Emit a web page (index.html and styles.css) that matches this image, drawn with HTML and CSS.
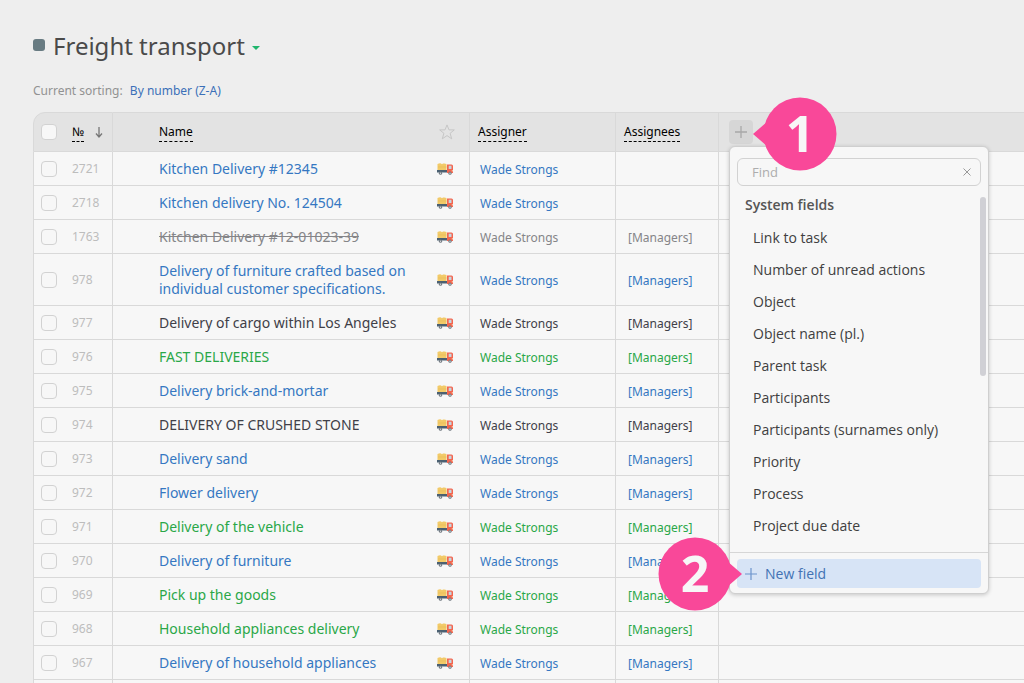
FILE: index.html
```html
<!DOCTYPE html>
<html lang="en">
<head>
<meta charset="utf-8">
<title>Freight transport</title>
<link rel="stylesheet" href="styles.css">
</head>
<body>
<svg class="sprite" aria-hidden="true">
  <symbol id="truck" viewBox="0 0 16 12">
    <rect x="0" y="7" width="11" height="2.500" fill="#4b6072"/>
    <path d="M.5 1q2-1 3.500-.6l1 .8 1-.6q2-.4 3.500.4V7H.5z" fill="#f2ca68"/>
    <path d="M1 4h8.500" stroke="#e9bd5a" stroke-width=".7"/>
    <path d="M10 1.500h4.500q1.500 0 1.500 1.500v7h-6z" fill="#f4654e"/>
    <path d="M11.700 2.700h2.800V6h-2.800z" fill="#c6d5de"/>
    <path d="M14.800 7h1.200v1.500h-1.200z" fill="#f7c0a0"/>
    <circle cx="3.500" cy="10.200" r="1.600" fill="#6c757d"/><circle cx="3.500" cy="10.200" r=".7" fill="#d9dcdf"/>
    <circle cx="13" cy="10.200" r="1.600" fill="#6c757d"/><circle cx="13" cy="10.200" r=".7" fill="#d9dcdf"/>
  </symbol>
</svg>
<main class="page">
  <h1 class="title"><span class="title-mark"></span>Freight transport<span class="title-caret"></span></h1>
  <p class="sorting">Current sorting: <a href="#">By number (Z-A)</a></p>
  <div class="grid">
  <table class="tasks">
    <colgroup><col class="c-num"><col class="c-name"><col class="c-assigner"><col class="c-assignees"><col></colgroup>
    <thead>
      <tr>
        <th><div class="num"><input type="checkbox" aria-label="Select all"><span class="head-label">№</span>
          <svg class="arrow" viewBox="0 0 8 11"><path d="M4 0v10M1 6.500L4 10l3-3.500" fill="none" stroke="#777" stroke-width="1.300"/></svg></div></th>
        <th><div class="name"><span class="text"><span class="head-label">Name</span></span>
          <svg class="star" viewBox="0 0 16 16"><path d="M8 .9l2 5h5.300l-4.200 3.400 1.600 5.500L8 11.600l-4.700 3.200 1.600-5.500L.7 5.900H6z" fill="none" stroke="#c6c6c6"/></svg></div></th>
        <th class="h-assigner"><span class="head-label">Assigner</span></th>
        <th class="h-assigner"><span class="head-label">Assignees</span></th>
        <th class="h-add">
          <button class="add" aria-label="Add column"><svg viewBox="0 0 12 12"><path d="M6 0v12M0 6h12" stroke="#a8a8a8" stroke-width="1.300"/></svg></button>
          <div class="menu">
            <div class="search"><input type="text" placeholder="Find" aria-label="Find"><button aria-label="Clear"><svg viewBox="0 0 8 8"><path d="M.5.5l7 7M7.500.5l-7 7" stroke="#999"/></svg></button></div>
            <div class="list">
              <h2>System fields</h2>
              <ul>
                <li>Link to task</li><li>Number of unread actions</li><li>Object</li><li>Object name (pl.)</li><li>Parent task</li><li>Participants</li><li>Participants (surnames only)</li><li>Priority</li><li>Process</li><li>Project due date</li>
              </ul>
              <span class="thumb"></span>
            </div>
            <div class="footer"><button class="new-field"><svg viewBox="0 0 12 12"><path d="M6 0v12M0 6h12" stroke="#6d94cc" stroke-width="1.200"/></svg>New field</button></div>
          </div>
          <span class="marker first"><svg viewBox="0 0 84 74"><circle cx="47" cy="37" r="36.500"/><path d="M0 37L15 24V50z"/></svg><b>1</b></span>
          <span class="marker second"><svg viewBox="0 0 84 74"><circle cx="37" cy="37" r="36.500"/><path d="M84 37L69 24V50z"/></svg><b>2</b></span>
        </th>
      </tr>
    </thead>
    <tbody id="rows"></tbody>
  </table>
  </div>
</main>
<script src="rows.js"></script>
</body>
</html>
```
FILE: rows.js
```js
const tasks = [
  ["2721", "Kitchen Delivery #12345", "blue", ""],
  ["2718", "Kitchen delivery No. 124504", "blue", ""],
  ["1763", "Kitchen Delivery #12-01023-39", "done", "[Managers]"],
  ["978", "Delivery of furniture crafted based on individual customer specifications.", "blue", "[Managers]"],
  ["977", "Delivery of cargo within Los Angeles", "dark", "[Managers]"],
  ["976", "FAST DELIVERIES", "green", "[Managers]"],
  ["975", "Delivery brick-and-mortar", "blue", "[Managers]"],
  ["974", "DELIVERY OF CRUSHED STONE", "dark", "[Managers]"],
  ["973", "Delivery sand", "blue", "[Managers]"],
  ["972", "Flower delivery", "blue", "[Managers]"],
  ["971", "Delivery of the vehicle", "green", "[Managers]"],
  ["970", "Delivery of furniture", "blue", "[Managers]"],
  ["969", "Pick up the goods", "green", "[Managers]"],
  ["968", "Household appliances delivery", "green", "[Managers]"],
  ["967", "Delivery of household appliances", "blue", "[Managers]"]
];
const rows = tasks.map(([id, name, state, assignees]) => `
  <tr class="${state}">
    <td><div class="num"><input type="checkbox" aria-label="Select ${id}"><span>${id}</span></div></td>
    <td><div class="name"><a class="text" href="#">${name}</a><svg class="truck" viewBox="0 0 16 12"><use href="#truck"/></svg></div></td>
    <td class="assigner"><a href="#">Wade Strongs</a></td>
    <td class="assignees">${assignees ? `<a href="#">${assignees}</a>` : ""}</td>
    <td></td>
  </tr>`);
rows.push("<tr><td></td><td></td><td></td><td></td><td></td></tr>");
document.getElementById("rows").innerHTML = rows.join("");
```
FILE: styles.css
```css
* { box-sizing: border-box; }
body {
  margin: 0;
  background: #eee;
  color: #404040;
  font: 12px/18px "Noto Sans", "Open Sans", sans-serif;
}
a { color: inherit; text-decoration: none; }
button { border: 0; padding: 0; font: inherit; }
svg { display: block; flex: none; }
.sprite { display: none; }
.page { height: 100vh; overflow: hidden; padding: 28px 0 0 33px; }
.title {
  display: flex;
  align-items: center;
  margin: 0;
  font-size: 24px;
  line-height: 36px;
  font-weight: 400;
  color: #4a4a4a;
}
.title-mark { width: 12px; height: 12px; margin: 0 8px 2px 0; border-radius: 3px; background: #687b82; }
.title-caret { margin: 4px 0 0 7px; border: 4px solid transparent; border-top-color: #1fb56c; border-bottom: 0; }
.sorting { margin: 18px 0 12px; color: #929292; }
.sorting a { margin-left: 4px; color: #3b70b8; }

.grid { margin-right: -2px; }
.tasks { width: 100%; table-layout: fixed; border-spacing: 0; }
.c-num { width: 80px; }
.c-name { width: 357px; }
.c-assigner { width: 146px; }
.c-assignees { width: 103px; }
th, td { height: 34px; padding: 0; text-align: left; font-weight: 400; border: solid #d9d9d9; border-width: 0 1px 1px 0; }
th { height: 40px; border-top-width: 1px; background: #e3e3e3; color: #000; }
td { background: #f7f7f7; }
th:first-child, td:first-child { border-left-width: 1px; }
th:first-child { border-top-left-radius: 12px; }
.head-label { display: inline-block; line-height: 18px; border-bottom: 1px dashed #000; }
.num { display: flex; align-items: center; padding-left: 7px; color: #bdbdbd; }
th .num { color: #000; }
.num input {
  appearance: none;
  width: 16px;
  height: 16px;
  margin: 0 15px 0 0;
  border: 1px solid #d2d2d2;
  border-radius: 4px;
  background: #f7f7f7;
}
td .num span { padding-top: 1px; }
.arrow { width: 8px; height: 11px; margin-left: 11px; }
.name { display: flex; align-items: center; padding: 0 16px 0 46px; }
.name .text { flex: 1; padding-right: 20px; }
td .name .text { font-size: 14px; }
th .name { padding-right: 14px; }
td .name { padding-top: 8px; padding-bottom: 7px; }
.star { width: 16px; height: 16px; }
.truck { width: 16px; height: 12px; }
.h-assigner { padding-left: 8px; }
.assigner { padding: 2px 0 0 10px; }
.assignees { padding: 2px 0 0 12px; }
.blue { color: #3577c2; }
.green { color: #2aa748; }
.dark { color: #404048; }
.done { color: #858588; }
.done .text { text-decoration: line-through; }

.h-add { position: relative; padding-left: 10px; }
.add { display: grid; place-items: center; width: 24px; height: 24px; border-radius: 4px; background: #d6d6d6; }
.add svg, .new-field svg { width: 12px; height: 12px; }
.menu {
  position: absolute;
  z-index: 1;
  top: 33px;
  left: 10px;
  width: 260px;
  border: 1px solid #cfcfcf;
  border-radius: 6px;
  background: #f7f7f7;
  box-shadow: 0 1px 4px rgba(0, 0, 0, .2);
  color: #404040;
  font-family: "Open Sans", "Noto Sans", sans-serif;
  font-size: 14px;
}
.search {
  display: flex;
  align-items: center;
  height: 28px;
  margin: 11px 7px 0;
  padding: 0 9px 0 14px;
  border: 1px solid #d2d2d2;
  border-radius: 6px;
}
.search input { flex: 1; min-width: 0; border: 0; padding: 0; outline: 0; background: none; font: inherit; font-size: 13px; }
.search input::placeholder { color: #adadad; }
.search button { background: none; }
.search svg { width: 8px; height: 8px; }
.list { position: relative; padding: 8px 0 10px 15px; }
.list h2 { margin: 0; color: #555; font-size: 14px; line-height: 22px; font-weight: 600; }
.list ul { margin: 6px 0 0; padding: 0 0 0 8px; list-style: none; }
.list li { line-height: 32px; }
.thumb { position: absolute; top: 11px; right: 2px; width: 6px; height: 179px; border-radius: 3px; background: #d0d0d5; }
.footer { padding: 6px 7px 5px; border-top: 1px solid #d6d6d6; }
.new-field {
  display: flex;
  align-items: center;
  gap: 8px;
  width: 100%;
  height: 29px;
  padding-left: 8px;
  border-radius: 4px;
  background: #d7e4f6;
  color: #4272b4;
}
.marker { position: absolute; z-index: 2; width: 84px; height: 74px; color: #f7f7f7; }
.marker svg { width: 84px; height: 74px; fill: #f94899; }
.marker b { position: absolute; top: 0; width: 74px; font: 700 50px/72px "Noto Sans", sans-serif; text-align: center; }
.first { top: -16px; left: 34px; }
.first b { right: 0; }
.second { top: 424px; left: -61px; }
.second b { left: 0; }
```
